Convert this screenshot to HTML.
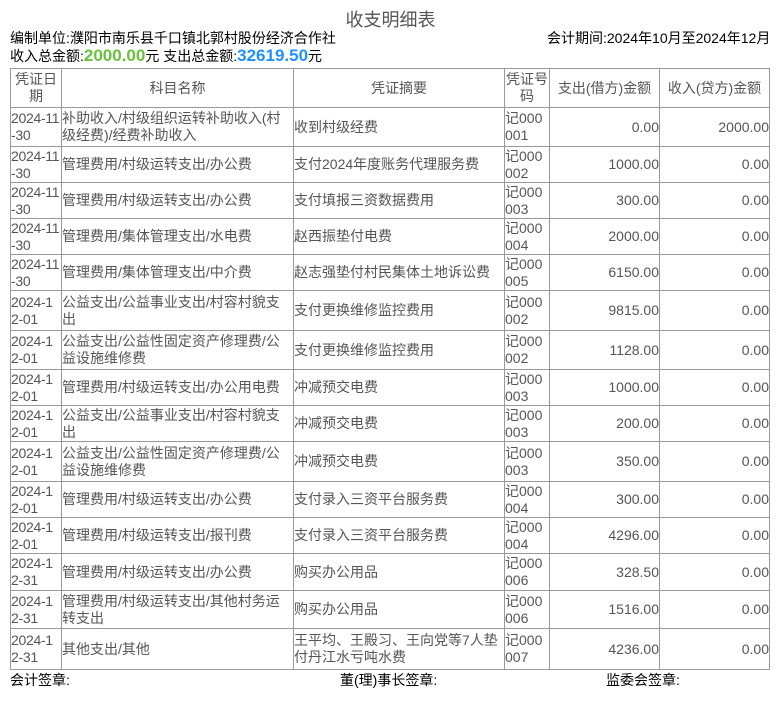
<!DOCTYPE html>
<html><head><meta charset="utf-8"><style>
body{margin:0;background:#fff;font-family:"Liberation Sans","Noto Sans CJK SC",sans-serif;color:#000;width:781px;height:701px;position:relative;overflow:hidden}
.t{position:absolute;top:6px;left:0;width:781px;text-align:center;font-size:18px;color:#555}
.a{position:absolute;font-size:14px;line-height:18px;white-space:nowrap}
table{position:absolute;left:10px;top:68px;border-collapse:collapse;table-layout:fixed;width:760px;font-size:14px;line-height:17px;color:#555}
td,th{border:1px solid #999;padding:0;vertical-align:middle;font-weight:normal;overflow:hidden;word-break:break-all}
td:first-child{white-space:nowrap;letter-spacing:-0.3px}
th{text-align:center}
.r{text-align:right}
</style></head><body>
<div class="t">收支明细表</div>
<div class="a" style="left:10px;top:29px">编制单位:濮阳市南乐县千口镇北郭村股份经济合作社</div>
<div class="a" style="left:547px;top:29px">会计期间:2024年10月至2024年12月</div>
<div class="a" style="left:10px;top:47px">收入总金额:<b style="color:#67c23a;font-size:17px">2000.00</b>元 支出总金额:<b style="color:#1e90ff;font-size:17px">32619.50</b>元</div>
<table>
<colgroup><col style="width:51px"><col style="width:232px"><col style="width:211px"><col style="width:45px"><col style="width:110px"><col style="width:110px"></colgroup>
<tr style="height:39px"><th>凭证日期</th><th>科目名称</th><th>凭证摘要</th><th>凭证号码</th><th>支出(借方)金额</th><th>收入(贷方)金额</th></tr>
<tr style="height:39px"><td>2024-11<br>-30</td><td>补助收入/村级组织运转补助收入(村级经费)/经费补助收入</td><td>收到村级经费</td><td>记000001</td><td class="r">0.00</td><td class="r">2000.00</td></tr>
<tr style="height:36px"><td>2024-11<br>-30</td><td>管理费用/村级运转支出/办公费</td><td>支付2024年度账务代理服务费</td><td>记000002</td><td class="r">1000.00</td><td class="r">0.00</td></tr>
<tr style="height:36px"><td>2024-11<br>-30</td><td>管理费用/村级运转支出/办公费</td><td>支付填报三资数据费用</td><td>记000003</td><td class="r">300.00</td><td class="r">0.00</td></tr>
<tr style="height:36px"><td>2024-11<br>-30</td><td>管理费用/集体管理支出/水电费</td><td>赵西振垫付电费</td><td>记000004</td><td class="r">2000.00</td><td class="r">0.00</td></tr>
<tr style="height:36px"><td>2024-11<br>-30</td><td>管理费用/集体管理支出/中介费</td><td>赵志强垫付村民集体土地诉讼费</td><td>记000005</td><td class="r">6150.00</td><td class="r">0.00</td></tr>
<tr style="height:40px"><td>2024-1<br>2-01</td><td>公益支出/公益事业支出/村容村貌支出</td><td>支付更换维修监控费用</td><td>记000002</td><td class="r">9815.00</td><td class="r">0.00</td></tr>
<tr style="height:39px"><td>2024-1<br>2-01</td><td>公益支出/公益性固定资产修理费/公益设施维修费</td><td>支付更换维修监控费用</td><td>记000002</td><td class="r">1128.00</td><td class="r">0.00</td></tr>
<tr style="height:36px"><td>2024-1<br>2-01</td><td>管理费用/村级运转支出/办公用电费</td><td>冲减预交电费</td><td>记000003</td><td class="r">1000.00</td><td class="r">0.00</td></tr>
<tr style="height:36px"><td>2024-1<br>2-01</td><td>公益支出/公益事业支出/村容村貌支出</td><td>冲减预交电费</td><td>记000003</td><td class="r">200.00</td><td class="r">0.00</td></tr>
<tr style="height:40px"><td>2024-1<br>2-01</td><td>公益支出/公益性固定资产修理费/公益设施维修费</td><td>冲减预交电费</td><td>记000003</td><td class="r">350.00</td><td class="r">0.00</td></tr>
<tr style="height:36px"><td>2024-1<br>2-01</td><td>管理费用/村级运转支出/办公费</td><td>支付录入三资平台服务费</td><td>记000004</td><td class="r">300.00</td><td class="r">0.00</td></tr>
<tr style="height:36px"><td>2024-1<br>2-01</td><td>管理费用/村级运转支出/报刊费</td><td>支付录入三资平台服务费</td><td>记000004</td><td class="r">4296.00</td><td class="r">0.00</td></tr>
<tr style="height:37px"><td>2024-1<br>2-31</td><td>管理费用/村级运转支出/办公费</td><td>购买办公用品</td><td>记000006</td><td class="r">328.50</td><td class="r">0.00</td></tr>
<tr style="height:38px"><td>2024-1<br>2-31</td><td>管理费用/村级运转支出/其他村务运转支出</td><td>购买办公用品</td><td>记000006</td><td class="r">1516.00</td><td class="r">0.00</td></tr>
<tr style="height:41px"><td>2024-1<br>2-31</td><td>其他支出/其他</td><td>王平均、王殿习、王向党等7人垫付丹江水亏吨水费</td><td>记000007</td><td class="r">4236.00</td><td class="r">0.00</td></tr>
</table>
<div class="a" style="left:10px;top:671px">会计签章:</div>
<div class="a" style="left:340px;top:671px">董(理)事长签章:</div>
<div class="a" style="left:606px;top:671px">监委会签章:</div>
</body></html>
